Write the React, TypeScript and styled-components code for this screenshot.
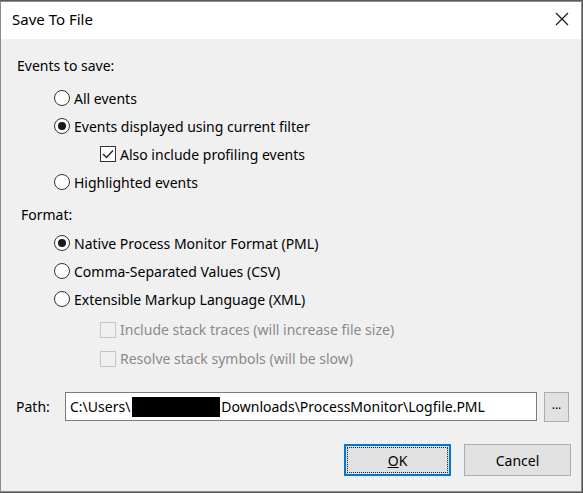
import React from "react";
import styled, { createGlobalStyle } from "styled-components";

const Global = createGlobalStyle`
  html, body { margin: 0; padding: 0; background: #5a5a5a; }
  body { font-family: "Noto Sans", "Open Sans", sans-serif; }
  * { box-sizing: border-box; }
`;

const Window = styled.div`
  width: 582px;
  height: 491px;
  margin-top: 1px;
  border: 1px solid #8c8c8c;
  background: #f0f0f0;
  display: flex;
  flex-direction: column;
  color: #000;
  font-size: 14px;
`;

const TitleBar = styled.div`
  height: 37px;
  background: #fff;
  display: flex;
  align-items: center;
  justify-content: space-between;
  padding: 0 12px 4px 11px;
  flex-shrink: 0;
`;

const Title = styled.span`
  font-size: 15px;
  color: #000;
`;

const Body = styled.div`
  flex: 1;
  display: flex;
  flex-direction: column;
  padding: 12px 10px 0 16px;
`;

const SectionLabel = styled.div<{ $indent?: number }>`
  height: 28px;
  display: flex;
  align-items: center;
  padding-left: ${(p) => p.$indent ?? 0}px;
`;

const Row = styled.label<{ $indent: number; $h?: number; $disabled?: boolean }>`
  height: ${(p) => p.$h ?? 28}px;
  display: flex;
  align-items: center;
  gap: 4px;
  padding-left: ${(p) => p.$indent}px;
  color: ${(p) => (p.$disabled ? "#8a8a8a" : "#000")};
`;

const Group = styled.div<{ $mt?: number }>`
  display: flex;
  flex-direction: column;
  margin-top: ${(p) => p.$mt ?? 0}px;
`;

const RadioCircle = styled.span<{ $checked?: boolean }>`
  width: 16px;
  height: 16px;
  border-radius: 50%;
  border: 1px solid #333;
  background: #fff;
  display: flex;
  align-items: center;
  justify-content: center;
  flex-shrink: 0;
  &::after {
    content: "";
    display: ${(p) => (p.$checked ? "block" : "none")};
    width: 8px;
    height: 8px;
    border-radius: 50%;
    background: #1a1a1a;
  }
`;

const CheckBox = styled.span<{ $disabled?: boolean }>`
  width: 16px;
  height: 16px;
  border: 1px solid ${(p) => (p.$disabled ? "#c4c4c4" : "#333")};
  background: ${(p) => (p.$disabled ? "#f0f0f0" : "#fff")};
  display: flex;
  align-items: center;
  justify-content: center;
  flex-shrink: 0;
`;

const PathRow = styled.div`
  display: flex;
  align-items: center;
  margin-top: 19px;
  height: 29px;
`;

const PathLabel = styled.span`
  width: 48px;
  margin-left: -1px;
  margin-right: 1px;
  flex-shrink: 0;
`;

const PathInput = styled.div`
  width: 472px;
  height: 29px;
  border: 1px solid #7a7a7a;
  background: #fff;
  display: flex;
  align-items: center;
  padding-left: 4px;
  white-space: nowrap;
  overflow: hidden;
`;

const Redacted = styled.span`
  display: inline-block;
  width: 88px;
  height: 20px;
  margin: 0 1px 0 2px;
  background: #000;
`;

const BrowseButton = styled.button`
  margin-left: 7px;
  width: 25px;
  height: 30px;
  border: 1px solid #adadad;
  background: #e1e1e1;
  font-family: inherit;
  font-size: 12px;
  padding: 0 0 4px;
  color: #000;
`;

const ButtonRow = styled.div`
  display: flex;
  justify-content: flex-end;
  gap: 13px;
  margin-top: 23px;
`;

const Button = styled.button<{ $default?: boolean }>`
  position: relative;
  width: 107px;
  height: 32px;
  background: #e1e1e1;
  border: ${(p) => (p.$default ? "2px solid #0078d7" : "1px solid #adadad")};
  font-family: inherit;
  font-size: 14px;
  color: #000;
  padding: 0;
  &::after {
    content: "";
    display: ${(p) => (p.$default ? "block" : "none")};
    position: absolute;
    inset: 1px;
    border: 1px dotted #222;
  }
`;

const U = styled.span`
  text-decoration: underline;
`;

const Check = () => (
  <svg width="12" height="10" viewBox="0 0 12 10">
    <path d="M1 5 L4.5 8.5 L11 1.5" fill="none" stroke="#222" strokeWidth="1.4" />
  </svg>
);

const CloseIcon = () => (
  <svg width="14" height="14" viewBox="0 0 14 14">
    <path d="M1 1 L13 13 M13 1 L1 13" stroke="#111" strokeWidth="1.1" />
  </svg>
);

export default function App() {
  return (
    <>
      <Global />
      <Window>
        <TitleBar>
          <Title>Save To File</Title>
          <CloseIcon />
        </TitleBar>
        <Body>
          <SectionLabel>Events to save:</SectionLabel>
          <Group $mt={5}>
            <Row $indent={37}>
              <RadioCircle />
              All events
            </Row>
            <Row $indent={37}>
              <RadioCircle $checked />
              Events displayed using current filter
            </Row>
            <Row $indent={83}>
              <CheckBox>
                <Check />
              </CheckBox>
              Also include profiling events
            </Row>
            <Row $indent={37}>
              <RadioCircle />
              Highlighted events
            </Row>
          </Group>
          <Group $mt={4}>
            <SectionLabel $indent={4}>Format:</SectionLabel>
          </Group>
          <Group $mt={1}>
            <Row $indent={37}>
              <RadioCircle $checked />
              Native Process Monitor Format (PML)
            </Row>
            <Row $indent={37}>
              <RadioCircle />
              Comma-Separated Values (CSV)
            </Row>
            <Row $indent={37}>
              <RadioCircle />
              Extensible Markup Language (XML)
            </Row>
          </Group>
          <Group $mt={2}>
            <Row $indent={83} $h={29} $disabled>
              <CheckBox $disabled />
              Include stack traces (will increase file size)
            </Row>
            <Row $indent={83} $h={29} $disabled>
              <CheckBox $disabled />
              Resolve stack symbols (will be slow)
            </Row>
          </Group>
          <PathRow>
            <PathLabel>Path:</PathLabel>
            <PathInput>
              C:\Users\<Redacted />Downloads\ProcessMonitor\Logfile.PML
            </PathInput>
            <BrowseButton>...</BrowseButton>
          </PathRow>
          <ButtonRow>
            <Button $default>
              <U>O</U>K
            </Button>
            <Button>Cancel</Button>
          </ButtonRow>
        </Body>
      </Window>
    </>
  );
}
